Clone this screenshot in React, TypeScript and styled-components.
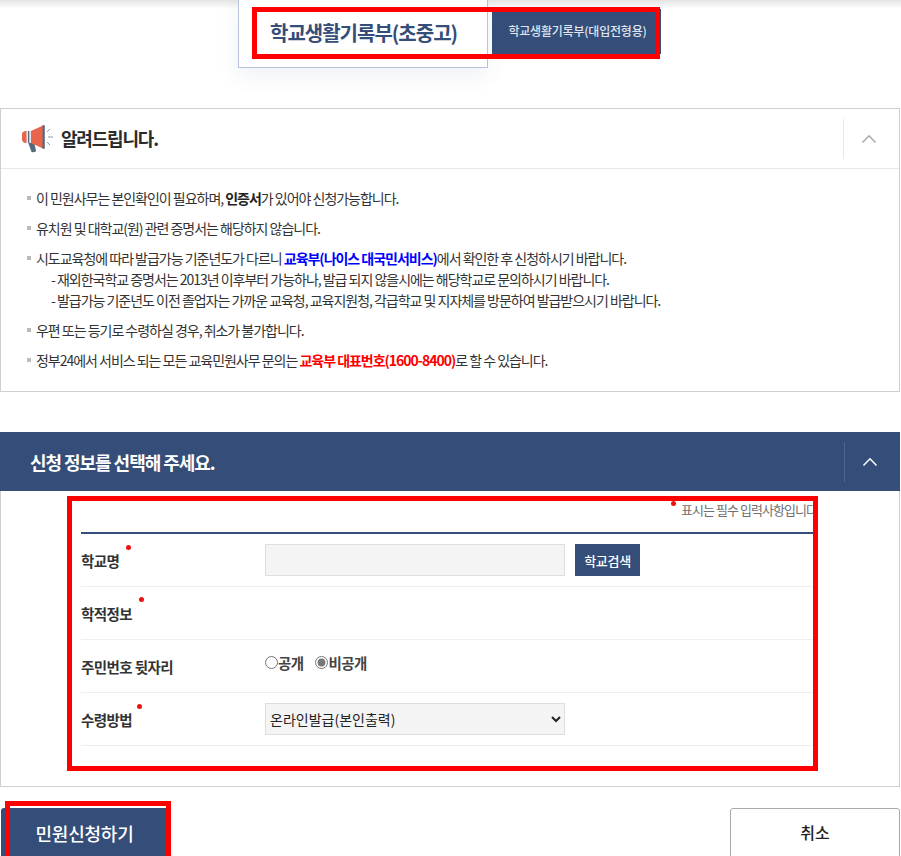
import React from 'react';
import styled, { createGlobalStyle } from 'styled-components';

const GlobalStyle = createGlobalStyle`
    html, body {
        margin: 0;
        padding: 0;
        background: #fff;
    }
    body {
        font-family: "Noto Sans CJK KR", "Noto Sans", sans-serif;
        color: #333;
    }
    * {
        box-sizing: border-box;
    }
`;

const navy = '#344d79';

const Page = styled.div`
    position: relative;
    width: 901px;
    height: 856px;
    overflow: hidden;
    background: #fff;
`;

const TopShade = styled.div`
    position: absolute;
    top: 0;
    left: 0;
    right: 0;
    height: 9px;
    background: linear-gradient(#e4e4e4, #ffffff);
`;

const TabRow = styled.div`
    position: relative;
    display: flex;
    align-items: flex-start;
    gap: 4px;
    height: 108px;
    padding-left: 238px;
`;

const ActiveTab = styled.div`
    width: 250px;
    height: 69px;
    margin-top: -1px;
    padding: 19px 0 0 31px;
    background: #fff;
    border: 1px solid #b8c2dc;
    box-shadow: 0 8px 20px rgba(52, 77, 121, 0.08);
    color: ${navy};
    font-size: 20px;
    font-weight: 700;
    line-height: 28px;
    letter-spacing: -1px;
    white-space: nowrap;
`;

const OtherTab = styled.div`
    width: 169px;
    height: 45px;
    margin-top: 9px;
    padding-left: 2px;
    background: ${navy};
    color: #dfe4ee;
    font-size: 12px;
    font-weight: 500;
    line-height: 44px;
    text-align: center;
    letter-spacing: -0.2px;
    white-space: nowrap;
`;

const Notice = styled.section`
    width: 900px;
    height: 284px;
    border: 1px solid #cfcfcf;
`;

const NoticeHeader = styled.header`
    display: flex;
    align-items: center;
    height: 60px;
    padding-left: 20px;
    border-bottom: 1px solid #e8e8e8;
`;

const NoticeTitle = styled.h2`
    flex: 1;
    margin: -2px 0 0 7px;
    color: #2b2b2b;
    font-size: 18px;
    font-weight: 700;
    letter-spacing: -1.2px;
`;

const Toggle = styled.div<{ $light?: boolean }>`
    display: flex;
    align-items: center;
    justify-content: center;
    width: 56px;
    height: 40px;
    padding-right: ${(p) => (p.$light ? '5px' : '6px')};
    border-left: 1px solid ${(p) => (p.$light ? '#4f678f' : '#e8e8e8')};
    color: ${(p) => (p.$light ? '#fff' : '#a9a9a9')};
`;

const NoticeList = styled.ul`
    list-style: none;
    margin: 0;
    padding: 19px 0 0 25px;
`;

const NoticeItem = styled.li`
    position: relative;
    margin-bottom: 9px;
    padding-left: 10px;
    color: #333;
    font-size: 14px;
    line-height: 21px;
    letter-spacing: -1.02px;
    white-space: nowrap;

    &::before {
        content: '';
        position: absolute;
        left: 1px;
        top: 8px;
        width: 4px;
        height: 4px;
        background: #bbb;
    }
`;

const SubLine = styled.div`
    padding-left: 15px;
`;

const Strong = styled.b<{ $color?: string }>`
    font-weight: 700;
    color: ${(p) => p.$color || '#222'};
`;

const Section = styled.section`
    width: 900px;
    margin-top: 40px;
`;

const SectionBar = styled.header`
    display: flex;
    align-items: center;
    height: 59px;
    padding-left: 30px;
    background: ${navy};
`;

const SectionTitle = styled.h2`
    flex: 1;
    margin: 0;
    color: #fff;
    font-size: 18px;
    font-weight: 700;
    letter-spacing: -1.05px;
`;

const SectionBody = styled.div`
    height: 296px;
    padding: 0 85px 0 80px;
    border: 1px solid #cfcfcf;
    border-top: 0;
`;

const RequiredNote = styled.p`
    position: relative;
    height: 43px;
    margin: 0 -3px 0 0;
    padding-top: 9px;
    color: #707070;
    font-size: 13px;
    line-height: 20px;
    letter-spacing: -0.95px;
    text-align: right;
    border-bottom: 2px solid ${navy};
`;

const Dot = styled.i`
    display: inline-block;
    width: 5px;
    height: 5px;
    border-radius: 50%;
    background: #f01010;
`;

const NoteDot = styled(Dot)`
    position: absolute;
    right: 141px;
    top: 10px;
`;

const Row = styled.div`
    display: flex;
    align-items: center;
    height: 53px;
    border-bottom: 1px solid #eeeeee;
`;

const Label = styled.div`
    position: relative;
    flex: none;
    width: 184px;
    color: #333;
    font-size: 14.5px;
    font-weight: 700;
    letter-spacing: -0.6px;
`;

const LabelDot = styled(Dot)<{ $left: number; $top: number }>`
    position: absolute;
    left: ${(p) => p.$left}px;
    top: ${(p) => p.$top}px;
`;

const TextInput = styled.input`
    width: 300px;
    height: 32px;
    background: #f4f4f4;
    border: 1px solid #dedede;
    outline: 0;
`;

const SearchButton = styled.button`
    width: 65px;
    height: 32px;
    margin-left: 10px;
    padding: 0;
    background: ${navy};
    border: 0;
    color: #fff;
    font: 500 13px "Noto Sans CJK KR", sans-serif;
    letter-spacing: -0.3px;
`;

const RadioGroup = styled.div`
    display: flex;
    align-items: center;
    margin-top: -7px;
`;

const RadioLabel = styled.label`
    display: flex;
    align-items: center;
    margin-right: 12px;
    color: #444;
    font-size: 14.5px;
    font-weight: 700;
    letter-spacing: -0.6px;
`;

const Radio = styled.input`
    width: 13px;
    height: 13px;
    margin: 0 0 0 0;
    accent-color: #777;
`;

const Select = styled.select`
    width: 300px;
    height: 32px;
    padding-left: 0;
    background: #f4f4f4;
    border: 1px solid #dedede;
    border-radius: 0;
    color: #222;
    font: 400 14px "Noto Sans CJK KR", sans-serif;
`;

const ButtonRow = styled.div`
    display: flex;
    justify-content: space-between;
    width: 900px;
    margin-top: 21px;
    padding-left: 1px;
`;

const SubmitButton = styled.button`
    width: 167px;
    height: 60px;
    padding: 0 0 10px 0;
    background: ${navy};
    border: 0;
    border-radius: 3px 0 0 0;
    color: #fff;
    font: 500 18px "Noto Sans CJK KR", sans-serif;
    letter-spacing: -0.2px;
`;

const CancelButton = styled.button`
    width: 170px;
    height: 60px;
    padding: 0 0 12px 0;
    background: #fff;
    border: 1px solid #aaa;
    border-radius: 3px;
    color: #222;
    font: 500 16px "Noto Sans CJK KR", sans-serif;
`;

const Highlight = styled.div<{ $x: number; $y: number; $w: number; $h: number; $b: number }>`
    position: absolute;
    left: ${(p) => p.$x}px;
    top: ${(p) => p.$y}px;
    width: ${(p) => p.$w}px;
    height: ${(p) => p.$h}px;
    border: ${(p) => p.$b}px solid #fe0000;
    pointer-events: none;
`;

const Megaphone = () => (
    <svg width="33" height="30" viewBox="0 0 33 30">
        <path d="M7 18h6l2 8.500c.3 1.800-4.200 2.300-4.800.7z" fill="#56697f" />
        <path d="M1 10.500C1 8.500 2.500 7 5 7h3v12H5c-2.500 0-4-1.500-4-4z" fill="#e9644a" />
        <rect x="5.500" y="7" width="4.500" height="12" fill="#e7ebf0" />
        <rect x="7" y="7" width="1.300" height="12" fill="#56697f" />
        <path d="M10 7l12-5.500v23L10 19z" fill="#e9644a" />
        <rect x="21.500" y="1" width="2.300" height="24" rx="1.100" fill="#56697f" />
        <path d="M26 8l3-3M27 13h5M26 18l3 3" stroke="#8b98a8" strokeWidth="1" fill="none" />
    </svg>
);

const Chevron = () => (
    <svg width="16" height="10" viewBox="0 0 16 10" fill="none">
        <path d="M1.500 8.500L8 1.800l6.500 6.700" stroke="currentColor" strokeWidth="1.500" />
    </svg>
);

export default function App() {
    return (
        <Page>
            <GlobalStyle />
            <TopShade />
            <TabRow>
                <ActiveTab>학교생활기록부(초중고)</ActiveTab>
                <OtherTab>학교생활기록부(대입전형용)</OtherTab>
            </TabRow>

            <Notice>
                <NoticeHeader>
                    <Megaphone />
                    <NoticeTitle>알려드립니다.</NoticeTitle>
                    <Toggle><Chevron /></Toggle>
                </NoticeHeader>
                <NoticeList>
                    <NoticeItem>이 민원사무는 본인확인이 필요하며, <Strong>인증서</Strong>가 있어야 신청가능합니다.</NoticeItem>
                    <NoticeItem>유치원 및 대학교(원) 관련 증명서는 해당하지 않습니다.</NoticeItem>
                    <NoticeItem>
                        시도교육청에 따라 발급가능 기준년도가 다르니 <Strong $color="#0000ff">교육부(나이스 대국민서비스)</Strong>에서 확인한 후 신청하시기 바랍니다.
                        <SubLine>- 재외한국학교 증명서는 2013년 이후부터 가능하나, 발급 되지 않을시에는 해당학교로 문의하시기 바랍니다.</SubLine>
                        <SubLine>- 발급가능 기준년도 이전 졸업자는 가까운 교육청, 교육지원청, 각급학교 및 지자체를 방문하여 발급받으시기 바랍니다.</SubLine>
                    </NoticeItem>
                    <NoticeItem>우편 또는 등기로 수령하실 경우, 취소가 불가합니다.</NoticeItem>
                    <NoticeItem>정부24에서 서비스 되는 모든 교육민원사무 문의는 <Strong $color="#ff0000">교육부 대표번호(1600-8400)</Strong>로 할 수 있습니다.</NoticeItem>
                </NoticeList>
            </Notice>

            <Section>
                <SectionBar>
                    <SectionTitle>신청 정보를 선택해 주세요.</SectionTitle>
                    <Toggle $light><Chevron /></Toggle>
                </SectionBar>
                <SectionBody>
                    <RequiredNote><NoteDot />표시는 필수 입력사항입니다</RequiredNote>
                    <Row>
                        <Label>학교명<LabelDot $left={45} $top={-5} /></Label>
                        <TextInput readOnly />
                        <SearchButton>학교검색</SearchButton>
                    </Row>
                    <Row>
                        <Label>학적정보<LabelDot $left={58} $top={-6} /></Label>
                    </Row>
                    <Row>
                        <Label>주민번호 뒷자리</Label>
                        <RadioGroup>
                            <RadioLabel><Radio type="radio" name="open" readOnly />공개</RadioLabel>
                            <RadioLabel><Radio type="radio" name="open" defaultChecked readOnly />비공개</RadioLabel>
                        </RadioGroup>
                    </Row>
                    <Row>
                        <Label>수령방법<LabelDot $left={56} $top={-5} /></Label>
                        <Select defaultValue="online">
                            <option value="online">온라인발급(본인출력)</option>
                        </Select>
                    </Row>
                </SectionBody>
            </Section>

            <ButtonRow>
                <SubmitButton>민원신청하기</SubmitButton>
                <CancelButton>취소</CancelButton>
            </ButtonRow>

            <Highlight $x={252} $y={7} $w={408} $h={52} $b={5} />
            <Highlight $x={67} $y={496} $w={751} $h={275} $b={5} />
            <Highlight $x={5} $y={801} $w={166} $h={60} $b={5} />
        </Page>
    );
}
